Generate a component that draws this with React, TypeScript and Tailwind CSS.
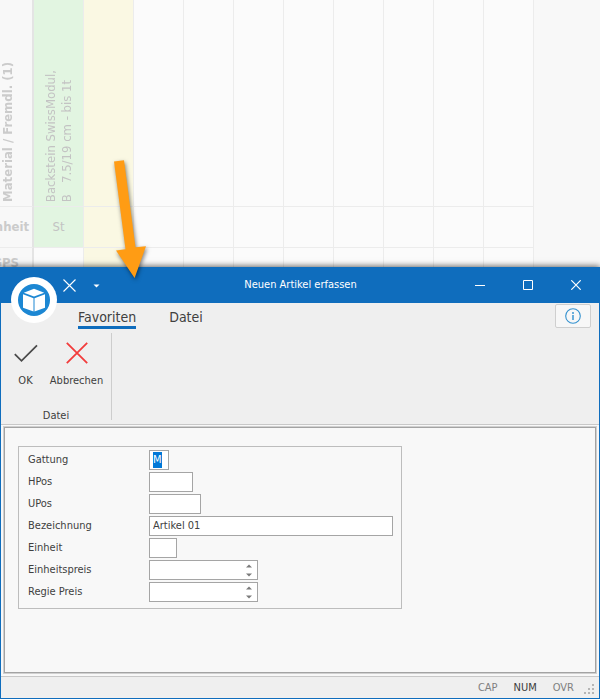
import { useEffect, useRef } from 'react'

interface Field {
  id: string
  label: string
  width: string
  value?: string
  selected?: boolean
  spin?: boolean
}

const FIELDS: Field[] = [
  { id: 'gattung', label: 'Gattung', width: 'w-5', value: 'M', selected: true },
  { id: 'hpos', label: 'HPos', width: 'w-11' },
  { id: 'upos', label: 'UPos', width: 'w-[52px]' },
  { id: 'bezeichnung', label: 'Bezeichnung', width: 'w-[244px]', value: 'Artikel 01' },
  { id: 'einheit', label: 'Einheit', width: 'w-7' },
  { id: 'einheitspreis', label: 'Einheitspreis', width: 'w-[109px]', spin: true },
  { id: 'regiepreis', label: 'Regie Preis', width: 'w-[109px]', spin: true },
]

const EMPTY_COLUMNS = Array.from({ length: 8 }, (_, i) => i)

function MaterialGrid() {
  return (
    <div className="h-[267px] overflow-hidden bg-[#f8f8f8]">
      <table className="table-fixed w-[534px] border-separate border-spacing-0 text-[#c3c3c3] text-[13px] leading-4">
        <tbody>
          <tr className="h-[207px]">
            <th className="w-[34px] p-0 pb-1 align-bottom border-r-2 border-b border-r-[#e4e4e4] border-b-[#ececec] text-[#cbcbcb]">
              <div className="[writing-mode:vertical-rl] rotate-180 whitespace-nowrap">
                Material / Fremdl. (1)
              </div>
            </th>
            <td className="w-[50px] p-0 pb-1 align-bottom bg-[#e2f5e1] border-r border-b border-[#ececec]">
              <div className="flex justify-center">
                <div className="[writing-mode:vertical-rl] rotate-180 whitespace-pre">
                  {'Backstein SwissModul,\nB   7.5/19 cm - bis 1t'}
                </div>
              </div>
            </td>
            <td className="w-[50px] bg-[#faf8e3] border-r border-b border-[#ececec]" />
            {EMPTY_COLUMNS.map(i => (
              <td key={i} className="w-[50px] bg-[#fbfbfb] border-r border-b border-[#ececec]" />
            ))}
          </tr>
          <tr className="h-[41px]">
            <th className="p-0 border-r-2 border-b border-r-[#e4e4e4] border-b-[#ececec] text-[#cbcbcb]">
              <div className="flex justify-end overflow-hidden pr-[3px]">Einheit</div>
            </th>
            <td className="p-0 text-center bg-[#e2f5e1] border-r border-b border-[#ececec]">St</td>
            <td className="bg-[#faf8e3] border-r border-b border-[#ececec]" />
            {EMPTY_COLUMNS.map(i => (
              <td key={i} className="bg-[#fbfbfb] border-r border-b border-[#ececec]" />
            ))}
          </tr>
          <tr className="h-[30px]">
            <th className="p-0 border-r-2 border-r-[#e4e4e4] text-[#cbcbcb]">
              <div className="flex justify-end overflow-hidden pr-[13px]">GPS</div>
            </th>
            <td className="bg-[#fbfbfb] border-r border-[#ececec]" />
            <td className="bg-[#faf8e3] border-r border-[#ececec]" />
            {EMPTY_COLUMNS.map(i => (
              <td key={i} className="bg-[#fbfbfb] border-r border-[#ececec]" />
            ))}
          </tr>
        </tbody>
      </table>
    </div>
  )
}

function AppLogo() {
  return (
    <svg className="absolute left-[11px] top-[10px] z-10" width="46" height="46" viewBox="0 0 46 46">
      <circle cx="23" cy="23" r="23" fill="#fff" />
      <circle cx="23" cy="23" r="16" fill="#1c87d3" />
      <path d="M23 11.800l10.200 3.900L23 19.600l-10.200-3.900z" fill="#fff" />
      <path d="M12 17.200l10.500 4v13.300L12 30.800z" fill="#fff" />
      <path d="M34 17.200l-10.500 4v13.300L34 30.800z" fill="#fff" />
    </svg>
  )
}

function TitleBar() {
  return (
    <header className="flex h-9 items-center bg-[#0f6dbd] text-white">
      <div className="flex flex-1 items-center">
        <button aria-label="Abbrechen" className="ml-[61px] p-px">
          <svg width="13" height="13" viewBox="0 0 13 13" stroke="#fff" strokeWidth="1.100">
            <path d="M.5.5l12 12M12.500.5l-12 12" />
          </svg>
        </button>
        <button aria-label="Anpassen" className="ml-4 pt-px">
          <svg width="7" height="4" viewBox="0 0 7 4" fill="#fff">
            <path d="M.5.5h6l-3 3z" />
          </svg>
        </button>
      </div>
      <h1>Neuen Artikel erfassen</h1>
      <div className="-mr-px flex flex-1 justify-end">
        <button aria-label="Minimieren" className="flex h-9 w-12 items-center justify-center">
          <svg width="10" height="10" viewBox="0 0 10 10" stroke="#fff">
            <path d="M0 5.500h10" />
          </svg>
        </button>
        <button aria-label="Maximieren" className="flex h-9 w-12 items-center justify-center">
          <svg width="10" height="10" viewBox="0 0 10 10" stroke="#fff" fill="none">
            <path d="M.5.5h9v9h-9z" />
          </svg>
        </button>
        <button aria-label="Schliessen" className="flex h-9 w-12 items-center justify-center">
          <svg width="10" height="10" viewBox="0 0 10 10" stroke="#fff" strokeWidth="1.200">
            <path d="M.3.3l9.400 9.400M9.700.3L.3 9.700" />
          </svg>
        </button>
      </div>
    </header>
  )
}

function Ribbon() {
  return (
    <div className="border-b border-[#c8c8c8] bg-[#efefef]">
      <nav className="flex h-[30px] items-start pl-[77px] pr-2 text-sm leading-[18px]">
        <button className="mt-[5px] border-b-3 border-[#0f6dbd]">Favoriten</button>
        <button className="mt-[5px] ml-[33px]">Datei</button>
        <button
          aria-label="Info"
          className="mt-px ml-auto flex h-6 w-9 items-center justify-center rounded-xs border border-[#cfcfcf] bg-[#f7f7f7]"
        >
          <svg width="16" height="16" viewBox="0 0 16 16" fill="none">
            <circle cx="8" cy="8" r="7.300" stroke="#3592cf" strokeWidth="1.100" />
            <path d="M8 4v2M8 7v5" stroke="#5aa6d8" strokeWidth="1.800" />
          </svg>
        </button>
      </nav>
      <div className="flex h-[91px] pb-1">
        <section className="flex w-[111px] flex-col justify-between border-r border-[#cdcdcd]">
          <div className="flex">
            <button className="flex w-[49px] flex-col items-center gap-2 pt-2">
              <svg width="24" height="24" viewBox="0 0 24 24" fill="none" stroke="#4a4a4a" strokeWidth="1.800">
                <path d="M.8 13.200l6.700 6.600L23 4.300" />
              </svg>
              OK
            </button>
            <button className="flex w-[53px] flex-col items-center gap-2 pt-2">
              <svg width="24" height="24" viewBox="0 0 24 24" fill="none" stroke="#f23c3c" strokeWidth="1.800">
                <path d="M1.800 1.800l20.400 20.400M22.200 1.800L1.800 22.200" />
              </svg>
              Abbrechen
            </button>
          </div>
          <h2 className="text-center -mb-1">Datei</h2>
        </section>
      </div>
    </div>
  )
}

function FieldRow({ field }: { field: Field }) {
  const ref = useRef<HTMLInputElement>(null)

  useEffect(() => {
    if (field.selected) {
      ref.current?.focus()
      ref.current?.select()
    }
  }, [field.selected])

  return (
    <div className="flex h-5 items-center">
      <label htmlFor={field.id} className="w-[121px] pb-px">
        {field.label}
      </label>
      <div className={`flex h-5 border border-[#a5a5a5] bg-white ${field.width}`}>
        <input
          id={field.id}
          ref={ref}
          defaultValue={field.value}
          className="min-w-0 flex-1 px-[3px] outline-none selection:bg-[#0078d7] selection:text-white"
        />
        {field.spin && (
          <div className="flex w-3 flex-col justify-center gap-[3px] pr-1">
            <button aria-label={`${field.label} erhöhen`} className="flex h-1.5 items-center justify-center">
              <svg className="shrink-0" width="6" height="4" viewBox="0 0 6 4" fill="#7a7a7a">
                <path d="M0 3.500h6L3 .5z" />
              </svg>
            </button>
            <button aria-label={`${field.label} verringern`} className="flex h-1.5 items-center justify-center">
              <svg className="shrink-0" width="6" height="4" viewBox="0 0 6 4" fill="#7a7a7a">
                <path d="M0 .5h6l-3 3z" />
              </svg>
            </button>
          </div>
        )}
      </div>
    </div>
  )
}

function StatusBar() {
  return (
    <footer className="flex h-[22px] items-center justify-end gap-4 border-t border-[#c8c8c8] bg-[#efefef] pr-1 text-[#808080]">
      <span>CAP</span>
      <span className="text-[#3c3c3c]">NUM</span>
      <span>OVR</span>
      <svg className="-ml-1.5 mt-1" width="11" height="11" viewBox="0 0 11 11" fill="#b5b5b5">
        <path d="M8 0h2v2H8zM4 4h2v2H4zM8 4h2v2H8zM0 8h2v2H0zM4 8h2v2H4zM8 8h2v2H8z" />
      </svg>
    </footer>
  )
}

// Callout arrow pointing at the dialog's title bar
function Arrow() {
  return (
    <svg
      className="absolute left-[106px] top-[152px] z-20 pointer-events-none drop-shadow-[1px_2px_2px_rgba(0,0,0,0.5)]"
      width="48"
      height="132"
      viewBox="0 0 48 132"
    >
      <path d="M8 9.500L18 8.300L29.500 95.200L40 94.300L28.600 126L10 98.500L19.500 97.200z" fill="#ff9c14" />
    </svg>
  )
}

export default function App() {
  return (
    <div className="relative flex min-h-screen flex-col bg-[#f8f8f8] font-['DejaVu_Sans_Condensed','DejaVu_Sans',sans-serif] text-[11px] leading-4 text-[#404040]">
      <MaterialGrid />
      <Arrow />
      <main className="relative flex flex-1 flex-col bg-[#0f6dbd] px-px pb-px shadow-[0_-1px_6px_rgba(0,0,0,0.6)]">
        <AppLogo />
        <TitleBar />
        <Ribbon />
        <div className="flex flex-1 flex-col bg-[#f8f8f8] px-0.5 pt-px pb-0.5">
          <div className="flex flex-1 flex-col border border-[#d0d0d0]">
            <div className="flex-1 border border-[#a3a3a3] px-[13px] py-[18px]">
              <form className="flex w-[384px] flex-col gap-0.5 border border-[#bdbdbd] pt-[3px] pr-2 pb-1.5 pl-[9px]">
                {FIELDS.map(field => (
                  <FieldRow key={field.id} field={field} />
                ))}
              </form>
            </div>
          </div>
        </div>
        <StatusBar />
      </main>
    </div>
  )
}
